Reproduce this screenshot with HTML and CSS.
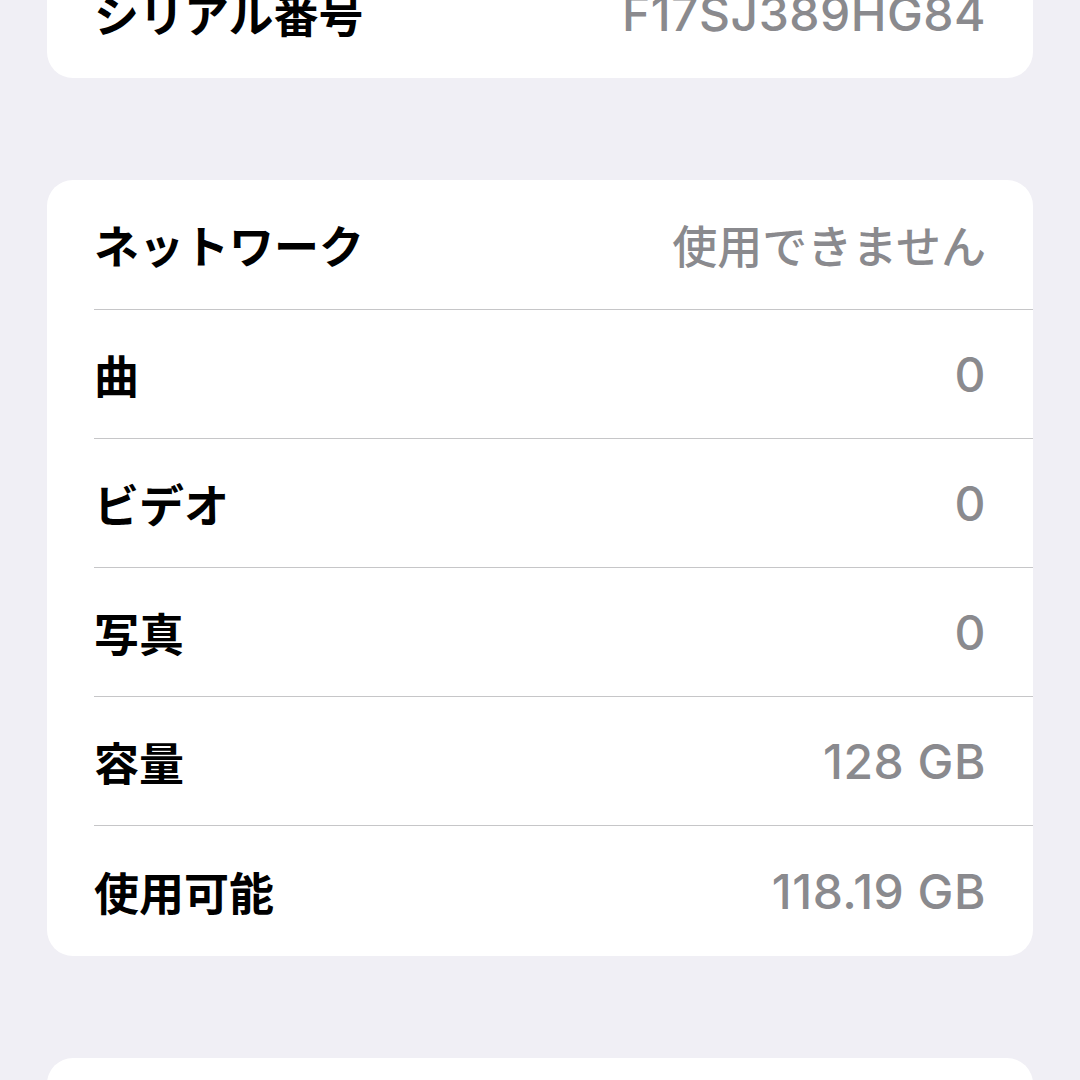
FILE: index.html
```html
<!DOCTYPE html>
<html lang="ja">
<head>
    <meta charset="UTF-8">
    <meta name="viewport" content="width=device-width, initial-scale=1.0">
    <title>情報</title>
    <link rel="stylesheet" href="styles.css">
</head>
<body>
    <div class="page">
        <div class="card card-top">
            <div class="row">
                <span class="label">シリアル番号</span>
                <span class="value num">F17SJ389HG84</span>
            </div>
        </div>

        <div class="card">
            <div class="row">
                <span class="label">ネットワーク</span>
                <span class="value">使用できません</span>
            </div>
            <div class="row">
                <span class="label">曲</span>
                <span class="value num">0</span>
            </div>
            <div class="row">
                <span class="label">ビデオ</span>
                <span class="value num">0</span>
            </div>
            <div class="row">
                <span class="label">写真</span>
                <span class="value num">0</span>
            </div>
            <div class="row">
                <span class="label">容量</span>
                <span class="value num">128 GB</span>
            </div>
            <div class="row row-last">
                <span class="label">使用可能</span>
                <span class="value num">118.19 GB</span>
            </div>
        </div>

        <div class="card">
            <div class="row"></div>
        </div>
    </div>
</body>
</html>
```

FILE: styles.css
```css
html, body {
    margin: 0;
    height: 1080px;
    overflow: hidden;
}
body {
    background: #f0eff5;
    font-family: "Inter", "Noto Sans CJK JP", sans-serif;
    color: #000;
}
.page {
    padding: 0 47px;
}
.card {
    background: #fff;
    border-radius: 26px;
    margin-bottom: 102px;
    overflow: hidden;
}
/* first section is scrolled up, only its last row shows */
.card-top {
    margin-top: -51px;
}
.row {
    box-sizing: border-box;
    height: 129px;
    margin-left: 47px;
    padding-right: 47px;
    display: flex;
    justify-content: space-between;
    align-items: center;
    font-size: 45px;
}
.row + .row {
    border-top: 1px solid #c6c6c8;
}
.row-last {
    height: 131px;
}
.label {
    font-weight: 600;
}
.value {
    color: #8a8a8e;
    font-weight: 500;
}
/* latin digits read a bit larger than the kana next to them */
.num {
    font-size: 48px;
    letter-spacing: 0.5px;
}
```
